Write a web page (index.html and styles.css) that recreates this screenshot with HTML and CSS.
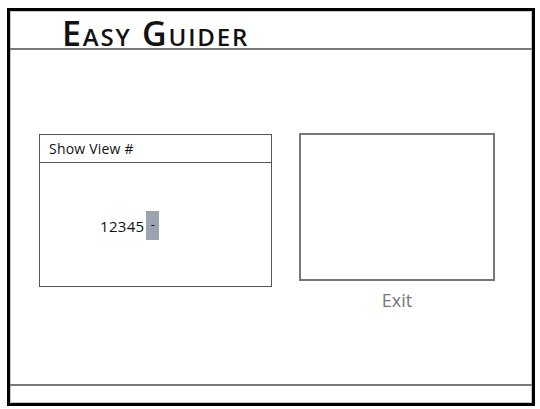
FILE: index.html
```html
<!DOCTYPE html>
<html lang="en">
<head>
  <meta charset="UTF-8" />
  <title>Easy Guider</title>
  <link rel="stylesheet" href="styles.css">
</head>
<body>
  <div class="frame">
    <header class="top">
      <span class="brand">Easy Guider</span>
    </header>

    <main class="stage">
      <section class="panel">
        <div class="panel-head">Show View #</div>
        <div class="panel-body">
          <span class="entry">12345</span><span class="cursor">-</span>
        </div>
      </section>

      <section class="side">
        <div class="preview"></div>
        <div class="exit">Exit</div>
      </section>
    </main>

    <footer class="bottom"></footer>
  </div>
</body>
</html>
```

FILE: styles.css
```css
body {
  margin: 0;
  background: #fff;
  font-family: 'Open Sans', sans-serif;
  color: #111;
}
.frame {
  box-sizing: border-box;
  width: 528px;
  height: 398px;
  margin: 8px 0 0 7px;
  border: 3px solid #000;
  box-shadow: inset 0 0 0 1px #c8c8c8;
  display: flex;
  flex-direction: column;
}
.top {
  height: 37px;
  border-bottom: 2px solid #7a7a7a;
  padding-left: 52px;
  display: flex;
  align-items: flex-end;
}
.brand {
  font-family: 'Open Sans', sans-serif;
  font-weight: 600;
  font-size: 34px;
  line-height: 1;
  font-variant: small-caps;
  letter-spacing: 1.8px;
  margin-bottom: -2px;
}
.stage {
  flex: 1;
  display: flex;
  align-items: flex-start;
  padding: 84px 0 0 29px;
  gap: 27px;
}
.panel {
  box-sizing: border-box;
  width: 233px;
  height: 153px;
  border: 1px solid #555;
  display: flex;
  flex-direction: column;
}
.panel-head {
  height: 27px;
  border-bottom: 1px solid #555;
  padding-left: 9px;
  font-size: 14px;
  line-height: 28px;
  letter-spacing: 0.2px;
}
.panel-body {
  flex: 1;
  display: flex;
  align-items: center;
  padding-left: 60px;
  padding-top: 2px;
}
.entry {
  font-size: 15px;
  letter-spacing: 0.3px;
}
.cursor {
  width: 13px;
  height: 29px;
  margin-left: 2px;
  background: #9aa4b0;
  font-size: 13px;
  line-height: 27px;
  text-align: center;
}
.side {
  margin-top: -1px;
  display: flex;
  flex-direction: column;
  align-items: center;
}
.preview {
  box-sizing: border-box;
  width: 196px;
  height: 148px;
  border: 2px solid #777;
}
.exit {
  margin-top: 7px;
  color: #777;
  font-size: 18px;
  line-height: 24px;
}
.bottom {
  height: 17px;
  border-top: 2px solid #7a7a7a;
}
```
